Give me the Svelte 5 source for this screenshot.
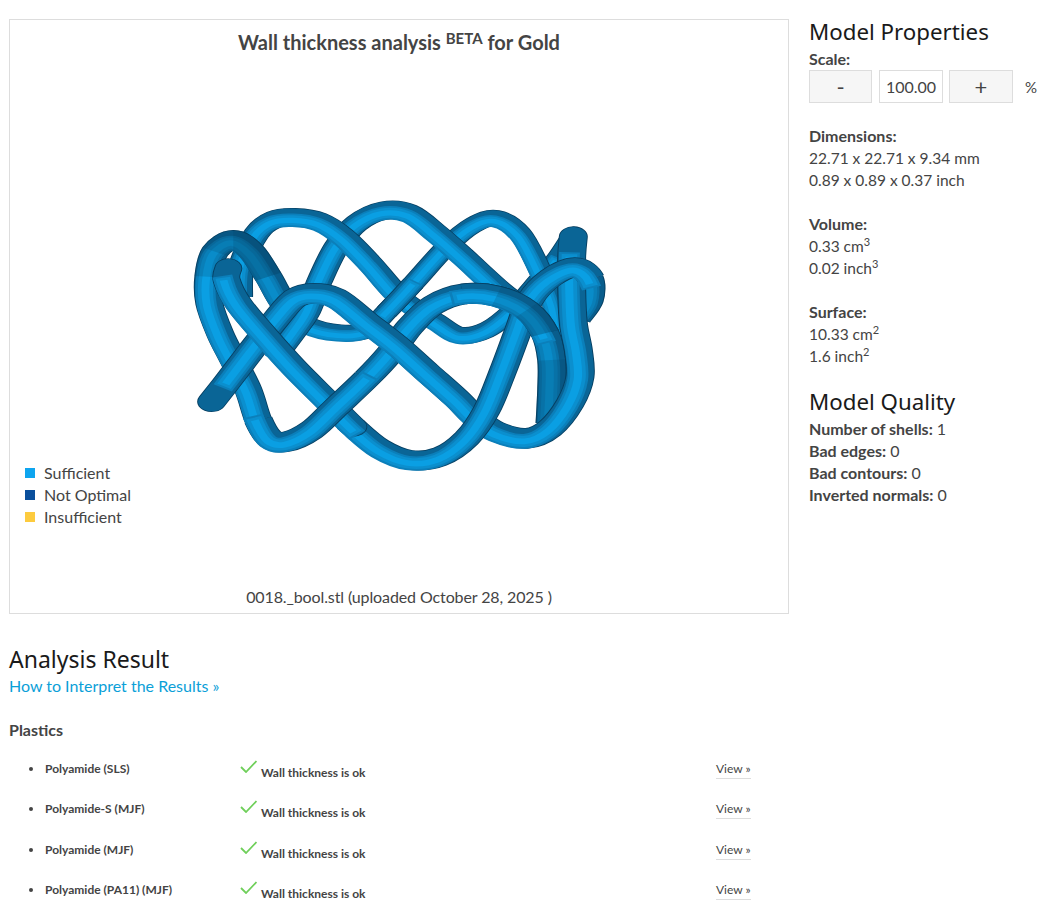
<script>
  const S1 = [[95,635],[150,565],[215,480],[290,385],[345,325],[400,310],[470,325],[560,395],[650,465],[740,545],[830,625],[885,680],[950,725],[1040,745],[1110,715],[1170,640],[1200,560],[1195,480],[1180,400],[1175,300],[1175,200],[1180,140]];
  const S2 = [[205,600],[235,690],[270,745],[320,755],[395,720],[470,650],[560,565],[630,490],[690,410],[760,345],[850,312],[950,318],[1040,360],[1095,430],[1115,510],[1115,600],[1110,700]];
  const S3 = [[145,235],[140,270],[175,340],[250,430],[340,530],[440,630],[520,710],[600,775],[690,810],[780,800],[860,745],[920,660],[970,540],[1015,420],[1050,330],[1110,265],[1185,232],[1232,265],[1232,330],[1195,385]];
  const K = [[270,745],[235,690],[205,600],[160,510],[120,430],[88,340],[85,260],[105,185],[160,150],[215,185],[265,260],[315,345],[385,405],[480,428],[560,420],[620,365],[700,280],[800,170],[880,105],[950,85],[1020,130],[1075,230],[1120,340],[1135,430]];
  const S5 = [[180,320],[185,225],[230,130],[280,90],[345,82],[420,95],[490,140],[570,220],[640,300],[700,350],[770,395],[840,435],[920,420],[1000,360],[1070,280],[1130,210],[1180,135]];
  const S6 = [[300,480],[345,420],[385,360],[420,270],[470,170],[530,100],[610,62],[690,70],[770,130],[850,200],[960,300],[1040,360]];

  const RATIO = 1.4;

  function path(p, i, j) {
    const q = p.map(([x, y]) => [x / RATIO, y]);
    let d = `M${q[i][0]} ${q[i][1]}`;
    for (let k = i; k < j; k++) {
      const a = q[Math.max(k - 1, 0)], b = q[k], c = q[k + 1], e = q[Math.min(k + 2, q.length - 1)];
      d += ` C${b[0] + (c[0] - a[0]) / 6} ${b[1] + (c[1] - a[1]) / 6} ${c[0] - (e[0] - b[0]) / 6} ${c[1] - (e[1] - b[1]) / 6} ${c[0]} ${c[1]}`;
    }
    return d;
  }

  const tube = [
    { d: path(S5, 8, 16), inner: path(S5, 8, 15), w: 50, cap: 'round' },
    { d: path(K, 11, 23), w: 50 },
    { d: path(S6, 0, 11), w: 56 },
    { d: path(S5, 0, 8), w: 56 },
    { d: path(K, 15, 16), w: 50 },
    { d: path(K, 1, 11), w: 60, shade: [path(K, 6, 11), path(K, 7, 10), path(K, 8, 10)] },
    { d: path(S2, 6, 16), w: 62, shade: [path(S2, 13, 16), path(S2, 14, 16)] },
    { d: path(S3, 17, 19), w: 56, shade: [path(S3, 17, 19)] },
    { d: path(S1, 0, 21), inner: path(S1, 1, 20), w: 62, cap: 'round' },
    { d: path(S3, 6, 17), w: 60 },
    { d: path(S2, 10, 13), w: 62, shade: [path(S2, 11, 13), path(S2, 12, 13)] },
    { d: path(S3, 0, 6), inner: path(S3, 1, 6), w: 60, cap: 'round' },
    { d: path(S2, 1, 6), w: 62 }
  ];

  const legend = [
    { label: 'Sufficient', colour: '#0ea5ef' },
    { label: 'Not Optimal', colour: '#0a4f9c' },
    { label: 'Insufficient', colour: '#fdcb3e' }
  ];
  const plastics = ['Polyamide (SLS)', 'Polyamide-S (MJF)', 'Polyamide (MJF)', 'Polyamide (PA11) (MJF)'];
</script>

<div class="page">
  <main class="left">
    <section class="viewer">
      <h1>Wall thickness analysis <sup>BETA</sup> for Gold</h1>
      <svg class="model" viewBox="0 0 1320 870" aria-label="3D model">
        {#each tube as t}
          <g fill="none" stroke-linejoin="round">
            <g transform="scale({RATIO} 1)" stroke-linecap={t.cap ?? 'butt'}>
              <path d={t.d} stroke="#063f62" stroke-width={t.w} />
              <path d={t.d} stroke="#0a6596" stroke-width={t.w - 4} />
            </g>
            <g transform="translate(-7 9) scale({RATIO} 1)" stroke-linecap="square">
              <path d={t.inner ?? t.d} stroke="#0b7fba" stroke-width={t.w * 0.72} />
              <path d={t.inner ?? t.d} stroke="#0b8fce" stroke-width={t.w * 0.54} />
              <path d={t.inner ?? t.d} stroke="#0a9fe3" stroke-width={t.w * 0.28} />
            </g>
            {#each t.shade ?? [] as s}
              <path d={s} transform="scale({RATIO} 1)" stroke="#063f62" stroke-opacity="0.2" stroke-width={t.w} />
            {/each}
          </g>
        {/each}
      </svg>
      <ul class="legend">
        {#each legend as l}
          <li><i style="background:{l.colour}"></i>{l.label}</li>
        {/each}
      </ul>
      <p class="file">0018._bool.stl (uploaded October 28, 2025 )</p>
    </section>

    <h2 class="analysis">Analysis Result</h2>
    <a class="link" href="#how">How to Interpret the Results »</a>
    <h3>Plastics</h3>
    <ul class="rows">
      {#each plastics as name}
        <li>
          <span class="name">{name}</span>
          <span class="status">
            <svg viewBox="0 0 17 13" width="17" height="13"><path d="M1 7 L6 12 L16.5 1" fill="none" stroke="#6fcf5a" stroke-width="1.8" /></svg>
            <b>Wall thickness is ok</b>
          </span>
          <a class="view" href="#view">View »</a>
        </li>
      {/each}
    </ul>
  </main>

  <aside class="right">
    <h2>Model Properties</h2>
    <div class="label">Scale:</div>
    <div class="scale">
      <button>-</button>
      <span class="value">100.00</span>
      <button>+</button>
      <span class="pct">%</span>
    </div>

    <div class="block">
      <div class="label">Dimensions:</div>
      <div class="num">22.71 x 22.71 x 9.34 mm</div>
      <div class="num">0.89 x 0.89 x 0.37 inch</div>
    </div>
    <div class="block">
      <div class="label">Volume:</div>
      <div class="num">0.33 cm<sup>3</sup></div>
      <div class="num">0.02 inch<sup>3</sup></div>
    </div>
    <div class="block">
      <div class="label">Surface:</div>
      <div class="num">10.33 cm<sup>2</sup></div>
      <div class="num">1.6 inch<sup>2</sup></div>
    </div>

    <h2 class="quality">Model Quality</h2>
    <div><span class="label">Number of shells:</span> 1</div>
    <div><span class="label">Bad edges:</span> 0</div>
    <div><span class="label">Bad contours:</span> 0</div>
    <div><span class="label">Inverted normals:</span> 0</div>
  </aside>
</div>

<style>
  :global(body) {
    margin: 0;
    background: #fff;
  }
  .page {
    display: grid;
    grid-template-columns: 780px 1fr;
    column-gap: 20px;
    padding-left: 9px;
    height: 912px;
    overflow: hidden;
    box-sizing: border-box;
    font: 16px/22px Lato, sans-serif;
    color: #444;
  }
  .left {
    padding-top: 19px;
  }
  .viewer {
    position: relative;
    height: 595px;
    box-sizing: border-box;
    border: 1px solid #ddd;
  }
  h1 {
    margin: 10px 0 0;
    font-size: 20px;
    line-height: 24px;
    font-weight: 700;
    text-align: center;
    color: #444;
  }
  sup {
    line-height: 0;
  }
  h1 sup {
    font-size: 15px;
    font-weight: 700;
    vertical-align: 6px;
  }
  .right sup {
    vertical-align: 6px;
    font-size: 11px;
  }
  .model {
    position: absolute;
    left: 170px;
    top: 170px;
    width: 440px;
    height: 290px;
  }
  .legend {
    position: absolute;
    left: 15px;
    top: 442px;
    margin: 0;
    padding: 0;
    list-style: none;
  }
  .legend li {
    display: flex;
    align-items: center;
    gap: 9px;
  }
  .legend i {
    width: 10px;
    height: 10px;
  }
  .file {
    position: absolute;
    left: 0;
    right: 0;
    bottom: 5px;
    margin: 0;
    text-align: center;
    letter-spacing: -0.11px;
  }
  h2 {
    margin: 0;
    font-family: "Noto Sans", sans-serif;
    font-size: 22.3px;
    line-height: 32px;
    font-weight: 400;
    color: #1a1a1a;
  }
  .analysis {
    margin-top: 29px;
    font-size: 23px;
  }
  .link {
    display: block;
    color: #0ba0d8;
    text-decoration: none;
  }
  h3 {
    margin: 22px 0 7.8px;
    font-size: 16px;
    line-height: 22px;
    font-weight: 700;
  }
  .rows {
    margin: 0;
    padding: 0 0 0 36px;
    list-style: none;
  }
  .rows li {
    position: relative;
    display: grid;
    grid-template-columns: 195px 476px auto;
    align-items: center;
    height: 40.4px;
    font-size: 12px;
    line-height: 16px;
  }
  .rows li::before {
    content: "";
    position: absolute;
    left: -16px;
    top: 18px;
    width: 4px;
    height: 4px;
    border-radius: 50%;
    background: #444;
  }
  .name {
    font-weight: 700;
  }
  .status {
    display: flex;
    align-items: flex-start;
    gap: 4px;
  }
  .status svg {
    margin-top: -1px;
  }
  .status b {
    position: relative;
    top: 4px;
  }
  .view {
    justify-self: start;
    color: #444;
    text-decoration: none;
    border-bottom: 1px solid #ddd;
    padding-bottom: 1px;
    margin-top: 2px;
  }
  .right {
    padding-top: 16px;
  }
  .label {
    font-weight: 700;
  }
  .num {
    font-size: 15.5px;
  }
  .scale {
    display: flex;
    align-items: stretch;
    height: 33px;
    gap: 6px;
  }
  .scale button,
  .value {
    box-sizing: border-box;
    width: 64px;
    border: 1px solid #ddd;
    font: inherit;
    color: #444;
    padding: 0;
  }
  .scale button {
    background: #f6f6f6;
    font-size: 22px;
  }
  .scale button:first-child {
    width: 63px;
    margin-right: 1px;
  }
  .value {
    display: flex;
    align-items: center;
    justify-content: center;
  }
  .pct {
    margin-left: 6px;
    align-self: center;
    font-size: 15px;
  }
  .block {
    margin-top: 22px;
  }
  .quality {
    margin-top: 19px;
  }
</style>
